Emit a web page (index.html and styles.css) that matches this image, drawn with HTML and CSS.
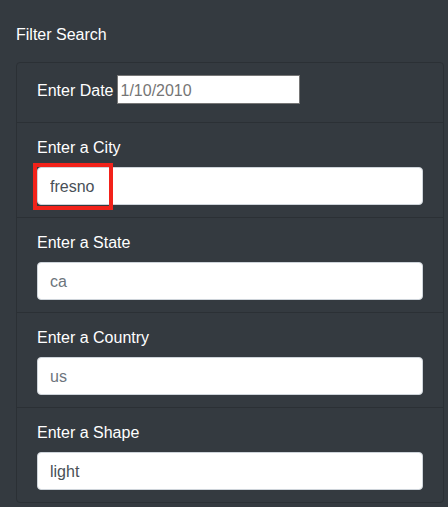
FILE: index.html
```html
<!DOCTYPE html>
<html>
<head>
<meta charset="utf-8">
<link rel="stylesheet" href="styles.css">
</head>
<body>
<div class="page">
  <div class="title">Filter Search</div>
  <ul class="card">
    <li class="item item-inline">
      <label class="lbl" for="date">Enter Date</label>
      <input class="date-input" id="date" type="text" placeholder="1/10/2010">
    </li>
    <li class="item">
      <label class="lbl" for="city">Enter a City</label>
      <div class="field">
        <input class="form-control" id="city" type="text" value="fresno">
        <span class="highlight"></span>
      </div>
    </li>
    <li class="item">
      <label class="lbl" for="state">Enter a State</label>
      <input class="form-control" id="state" type="text" placeholder="ca">
    </li>
    <li class="item">
      <label class="lbl" for="country">Enter a Country</label>
      <input class="form-control" id="country" type="text" placeholder="us">
    </li>
    <li class="item">
      <label class="lbl" for="shape">Enter a Shape</label>
      <input class="form-control" id="shape" type="text" value="light">
    </li>
  </ul>
</div>
</body>
</html>
```

FILE: styles.css
```css
* { box-sizing: border-box; }
html, body {
  margin: 0;
  padding: 0;
  background: #343a40;
}
body {
  font-family: "Liberation Sans", Arial, Helvetica, sans-serif;
  font-size: 16px;
  line-height: 24px;
  color: #f8f9fa;
}
.page {
  padding: 23px 4px 0 16px;
}
.title {
  margin-bottom: 15px;
  color: #fff;
}
.card {
  list-style: none;
  margin: 0;
  padding: 0;
  width: 428px;
  border: 1px solid #2b3035;
  border-radius: 4px;
  background: #343a40;
}
.item {
  padding: 12px 20px;
  border-top: 1px solid #2b3035;
  display: flex;
  flex-direction: column;
}
.item:first-child {
  border-top: none;
}
.item-inline {
  flex-direction: row;
  align-items: baseline;
  height: 59px;
  padding-top: 12px;
}
.lbl {
  color: #fff;
  padding-top: 1px;
  margin-bottom: 7px;
}
.item-inline .lbl {
  margin-right: 4px;
  margin-bottom: 0;
}
.date-input {
  width: 183px;
  height: 29px;
  border: 1px solid #767676;
  border-radius: 0;
  padding: 2px 2px 0;
  font-family: inherit;
  font-size: 16px;
  color: #000;
  background: #fff;
  outline: none;
}
.date-input::placeholder {
  color: #757575;
  opacity: 1;
}
.field {
  position: relative;
}
.form-control {
  display: block;
  width: 386px;
  height: 38px;
  padding: 7px 12px 5px;
  border: 1px solid #ced4da;
  border-radius: 4px;
  background: #fff;
  font-family: inherit;
  font-size: 16px;
  line-height: 24px;
  color: #495057;
  outline: none;
}
.form-control::placeholder {
  color: #6c757d;
  opacity: 1;
}
.highlight {
  position: absolute;
  left: -4px;
  top: -4px;
  width: 80px;
  height: 47px;
  border: 4px solid #f2221a;
  pointer-events: none;
}
```
